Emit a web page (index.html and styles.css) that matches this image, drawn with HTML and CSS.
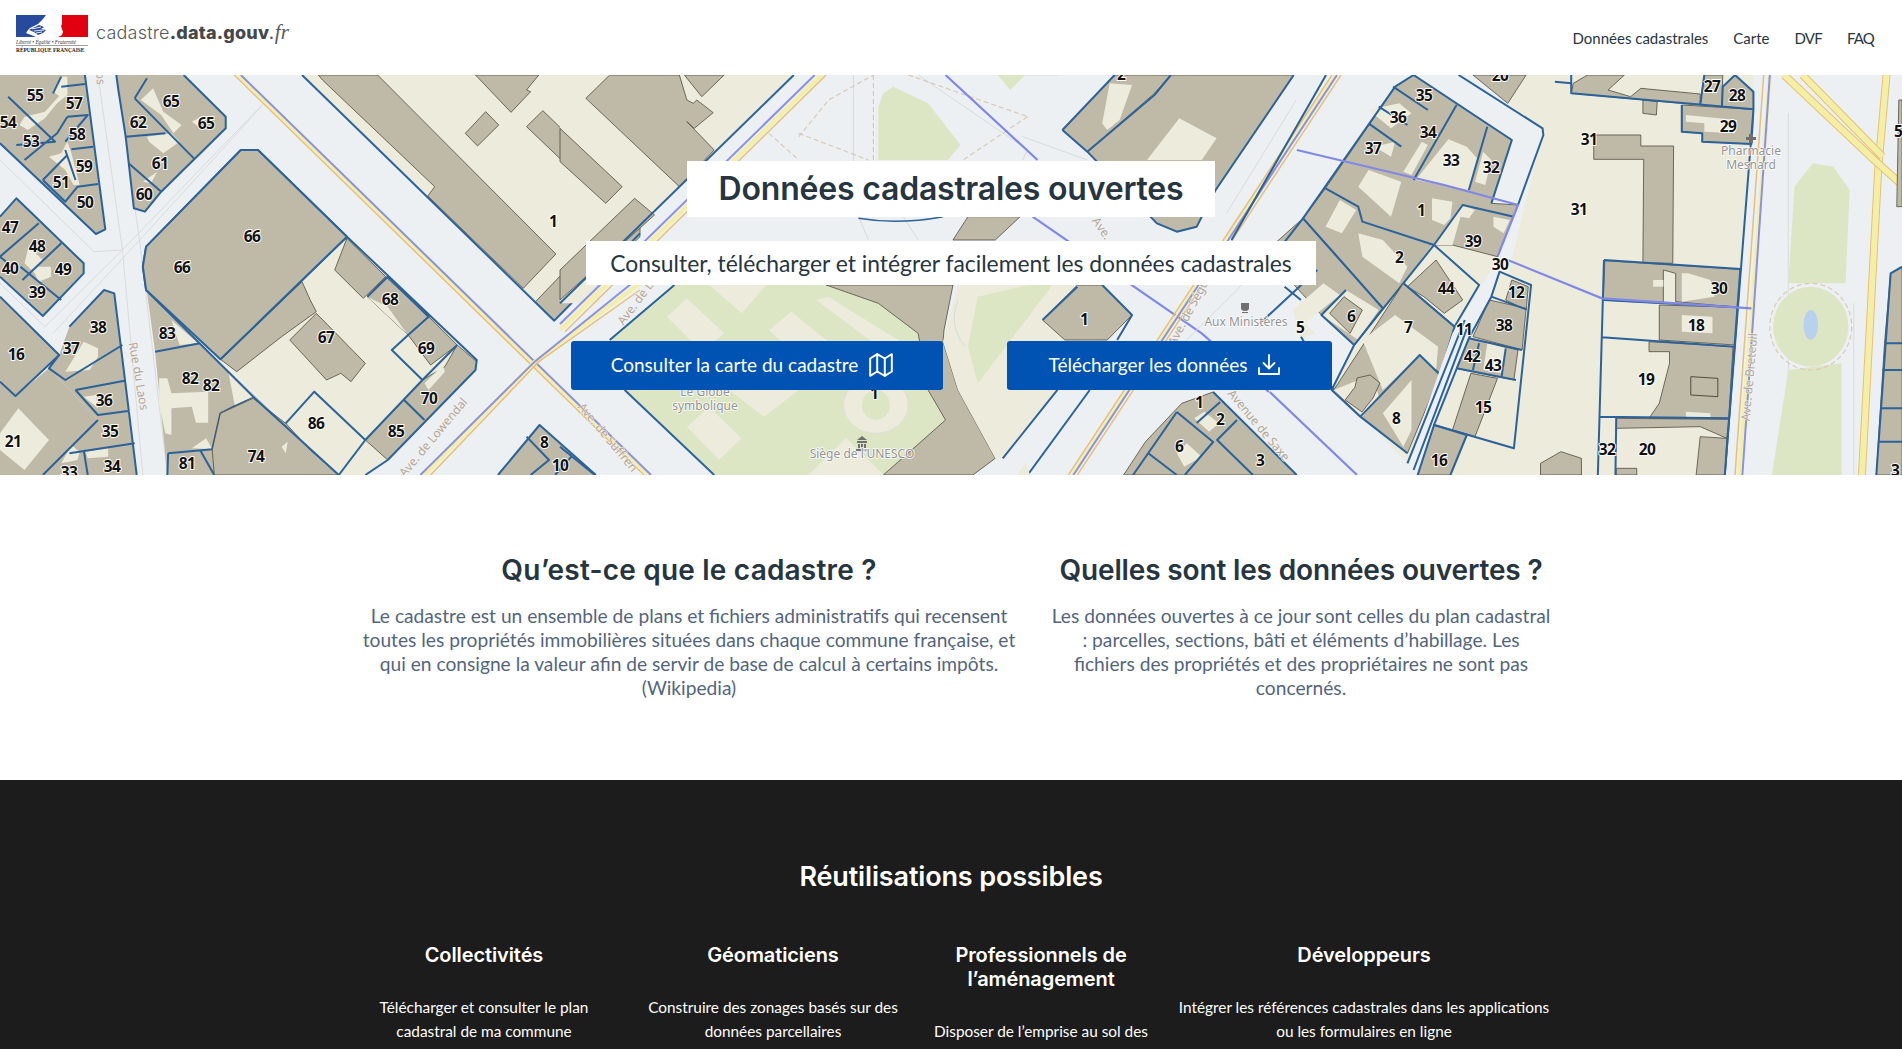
FILE: index.html
```html
<!DOCTYPE html>
<html lang="fr">
<head>
<meta charset="utf-8">
<title>cadastre.data.gouv.fr</title>
<link rel="stylesheet" href="styles.css">
</head>
<body>
<header class="site-header">
  <a class="brand" href="#">
    <svg class="marianne" viewBox="0 0 72 41" width="72" height="41" aria-label="République Française">
      <rect x="0" y="0" width="72" height="22" fill="#fff"/>
      <path d="M0 0H30L27 4L24 7L22 9L14 13L12 15L10 18L20 22H0Z" fill="#264a9d"/>
      <path d="M46 0H72V22H42L46 20L47 17L46 14L45 11L46 9L46 6Z" fill="#e1000f"/>
      <path d="M13 15L23 10L28 12L25 14L30 15L27 18L22 20L18 17Z" fill="#264a9d"/>
      <path d="M16 14L25 12M18 16L28 15M20 18L26 17" stroke="#fff" stroke-width=".9" fill="none"/>
      <text class="motto" x="0" y="28.500">Liberté • Égalité • Fraternité</text>
      <rect x="0" y="30" width="72" height=".7" fill="#777"/>
      <text class="rf" x="0" y="37">RÉPUBLIQUE FRANÇAISE</text>
    </svg>
    <span class="brand-name">cadastre<b>.data.gouv</b><i>.fr</i></span>
  </a>
  <nav class="site-nav">
    <a href="#">Données cadastrales</a>
    <a href="#">Carte</a>
    <a class="nav-caps" href="#">DVF</a>
    <a class="nav-caps" href="#">FAQ</a>
  </nav>
</header>

<section class="hero">
  <svg class="map" viewBox="0 75 1902 400" width="1902" height="400" preserveAspectRatio="none" aria-hidden="true">
    <rect x="0" y="75" width="1902" height="400" class="road"/>

    <!-- West part of the map -->
    <g transform="translate(0,70) scale(.40816,.33333)">
      <path class="th" d="M240 15L300 540L350 1215M285 15L345 540L410 1215M650 95L300 540L110 770L0 640M640 110L350 500L130 790M0 270L230 545L300 540"/>
      <path class="yl" d="M585 15L1590 1215"/><path class="or" d="M574 15L1578 1215"/><path class="pu" d="M590 15L1595 1215"/>
      <path class="yl" d="M1568 640L1310 875L1040 1215"/><path class="pu" d="M1568 620L1310 875L1030 1215"/><path class="or" d="M1568 660L1320 875L1055 1215"/>
      <path class="c" d="M740 15L1358 752L1568 490V15Z"/>
      <path class="b" d="M780 15L925 15L1362 552L1282 655L1048 378L1065 350L790 30Z"/>
      <path class="b" d="M1190 125L1222 165L1170 228L1140 190Z"/>
      <path class="b" d="M1330 122L1522 350L1487 400L1290 170Z"/>
      <path class="b" d="M1165 15H1320L1290 60L1300 65L1252 127Z"/>
      <path class="b" d="M1437 85L1500 15H1568V240Z"/>
      <path class="b" d="M1555 385L1568 398V500L1358 752L1312 695Z"/>
      <path class="p" d="M740 15L1358 752L1568 490"/>

      <path class="b nl" d="M0 15H208L258 478L235 492L0 220Z"/>
      <path class="c" d="M150 20L130 65L145 78L110 125L60 140L48 165L68 180L110 145L140 100L165 75L165 20Z"/>
      <path class="c" d="M165 215L150 250L120 260L160 300L180 345L195 345L175 250Z"/>
      <path class="p" d="M0 220L235 492L258 478L208 15M20 80L135 215L40 225M150 50L208 42M130 70L150 20M165 140L215 135L160 215M105 330L165 255M175 238L228 230M105 330L160 395L190 350L240 342M185 330L160 240M60 270L140 190L165 140"/>

      <path class="b nl" d="M285 15H450L553 140V175L395 365L355 425L328 415L308 200L290 60Z"/>
      <path class="c" d="M345 90L375 55L400 125L445 165L425 190L395 135Z"/>
      <path class="c" d="M360 200L420 190L440 215L400 250L365 215Z"/>
      <path class="c" d="M350 335L385 305L370 340Z"/>
      <path class="c" d="M470 155L492 140L492 175Z"/>
      <path class="c" d="M480 260L545 185L553 175L490 265Z"/>
      <path class="p" d="M285 15L290 60L308 200L328 415L355 425L395 365L553 175V140L450 15M330 85L475 265M308 200L405 190M315 280L395 365M360 25L330 85"/>

      <path class="b nl" d="M0 440L40 385L205 580V610L105 738L0 620Z"/>
      <path class="c" d="M70 530L105 570L90 590L125 590L125 620L95 635L85 610L60 580Z"/>
      <path class="p" d="M0 440L40 385L205 580V610L105 738L0 620M95 460L0 560M150 520L55 630M50 590L150 690M0 560L30 590"/>

      <path class="b nl" d="M0 680L145 855L38 978L0 935Z"/>
      <path class="b nl" d="M255 660L280 670L335 1215H105L240 1050L120 895L145 855L170 770Z"/>
      <path class="b nl" d="M0 935L38 978L120 895L240 1050L105 1215H0Z"/>
      <path class="c" d="M0 1090L45 1015L120 1110L60 1200L0 1140Z"/>
      <path class="c" d="M160 905L205 815L240 835L240 860L220 900Z"/>
      <path class="c" d="M205 980L235 975L240 1015Z"/>
      <path class="c" d="M210 1145L265 1135L265 1160L215 1165Z"/>
      <path class="c" d="M150 1180L175 1125L195 1145L190 1170Z"/>
      <path class="p" d="M0 680L145 855L38 978L0 935M145 855L120 895L160 930L300 825M170 770L255 660L280 670L335 1215M185 960L305 932M185 960L240 1035L318 1022M170 1150L330 1120M205 1140L215 1215M105 1215L240 1050"/>

      <path class="b nl" d="M360 665L610 960L830 1215H410L380 845Z"/>
      <path class="c" d="M420 750L485 820L440 825Z"/>
      <path class="c" d="M390 925H410L420 970L510 965V1058L480 1058L470 1010L420 1015V1095L405 1090L390 1000Z"/>
      <path class="c" d="M470 1135L505 1105L520 1138Z"/>
      <path class="c" d="M515 855L525 850L530 865Z"/>
      <path class="p" d="M380 845L490 820M412 1150L520 1138L540 1030L620 980M490 1140L525 1215M410 1215L412 1150"/>

      <path class="c" d="M850 500L1168 870L1165 900L950 1170L895 1215H830L540 868Z"/>
      <path class="b" d="M820 600L850 505L945 620L890 685Z"/>
      <path class="b" d="M540 868L740 635L760 690L775 725L690 800L580 905Z"/>
      <path class="b" d="M710 810L775 730L895 880L860 935L835 910L800 930Z"/>
      <path class="b" d="M945 620L1050 740L1000 795L900 680Z"/>
      <path class="c" d="M900 680L1000 795L985 770L950 710Z"/>
      <path class="b" d="M1050 740L1120 825L1055 885L1000 795Z"/>
      <path class="b" d="M1120 825L1168 875L1165 900L950 1170L895 1110L1035 930L1090 890Z"/>
      <path class="c" d="M1040 940L1085 885L1090 905L1050 960Z"/>
      <path class="b" d="M620 985L700 1060L760 1140L830 1215H525L520 1140L540 1030Z"/>
      <path class="c" d="M690 1130L705 1115L700 1150Z"/>
      <path class="c" d="M560 910L620 980L575 1005Z"/>
      <path class="p" d="M358 660L620 980L830 1215M358 660L350 590L358 530L590 240H632L850 500L1168 870L1165 900L950 1170L895 1215M540 868L850 500M700 1060L770 965L895 1110L830 1215M900 680L950 620L1050 740L1000 795M1000 795L960 840L1035 930L1120 825M895 1110L1035 930M990 990L1040 1050"/>
      <path class="b nl" d="M590 240H632L850 500L540 868L358 660L350 590L358 530Z"/>
      <path class="p" d="M358 660L350 590L358 530L590 240H632L850 500L540 868Z"/>
      <path class="b nl" d="M1322 1065L1460 1215H1220Z"/><path class="p" d="M1220 1215L1322 1065L1460 1215M1290 1100L1345 1170L1300 1215M1400 1160L1360 1215"/>
    </g>

    <!-- Centre part of the map -->
    <g transform="translate(560,70) scale(.49744,.33333)">
      <path class="th" d="M590 15L590 280M720 15L940 240L930 270M930 200L1060 270M920 15L1000 15M600 440L620 510M690 440L720 510"/>
      <path class="g" d="M650 70L670 50L740 100L805 225L780 270H640V110Z"/>
      <path class="g" d="M880 15H935L905 60Z"/>
      <path class="da" d="M630 15V270M480 200L540 90L630 15M700 15L940 140M480 190L620 270M940 140L810 270M420 190L480 270"/>
      <path class="pur" d="M775 15L960 270M950 440L1290 790L1425 966"/>
      <path class="th" d="M1480 90L1340 430M1530 70L1340 500"/>

      <path class="c" d="M80 15H470L0 700Z"/><path class="c" d="M0 15H80V700H0Z"/>
      <path class="b" d="M52 85L100 15H240L255 90L268 100L275 90L308 128L270 175L255 155L310 240L240 350Z"/>
      <path class="b" d="M250 15H330L285 80Z"/>
      <path class="b" d="M0 175L125 350L92 400L0 275Z"/>
      <path class="b" d="M0 600L150 385L190 435L0 690Z"/>
      <path class="p" d="M470 15L0 700"/>
      <path class="yl" d="M525 15L0 780"/><path class="or" d="M535 15L10 785"/><path class="pu" d="M512 15L0 762"/>
      <path class="p" d="M70 1215L0 1130"/>

      <path class="g" d="M230 645H535L640 700L720 790L740 960L775 1050L650 1215L575 1105L500 1215H310L130 960L100 810Z"/>
      <path class="c" d="M215 740L255 685L330 790L285 845Z"/>
      <path class="c" d="M300 645H415L365 730Z"/>
      <path class="c" d="M420 780L465 725L560 840L510 900Z"/>
      <path class="c" d="M255 1070L300 1010L365 1105L320 1170Z"/>
      <path class="c" d="M340 960H480L410 1040Z"/>
      <path class="c" d="M515 690L540 680L690 820L640 830Z"/>
      <ellipse cx="635" cy="1005" rx="65" ry="85" class="cr"/>
      <ellipse cx="635" cy="1005" rx="28" ry="45" class="g"/>
      <path class="b" d="M535 645H790L772 780L770 815L800 960L875 1165L830 1215H650L775 1050L740 960L720 790L640 700Z"/>
      <path class="c" d="M575 1105L650 1215H500Z"/>
      <path class="c" d="M790 700L800 645H1030L1145 735L1100 820L1000 960L890 1165H875L800 960L770 815Z"/>
      <path class="g" d="M840 680L940 645H990L840 940L820 830Z"/>
      <path class="th" d="M800 690Q780 770 815 830"/>
      <path class="b" d="M1040 645H1090L1150 735L1100 810H1015L970 750Z"/>
      <path class="p" d="M1090 645L1150 735L1120 810M1040 650L970 750M230 645L100 810M130 960L310 1215M1000 960L890 1165"/>

      <path class="b" d="M1010 180L1115 15H1228L1195 70L1060 245Z"/>
      <path class="c" d="M1105 40L1150 45L1125 150L1100 180L1090 160Z"/>
      <path class="b" d="M1060 245L1195 75L1228 15H1475L1318 360L1280 470L1240 485L1200 460Z"/>
      <path class="c" d="M1180 270L1245 145L1320 205L1290 270Z"/>
      <path class="p" d="M1010 180L1115 15M1010 180L1060 245L1195 75L1228 15M1475 15L1318 360L1280 470L1240 485L1200 460L1060 245"/>
      <path class="psoft" d="M600 445Q680 465 770 440"/>
      <path class="b" d="M820 440H925L875 510H790Z"/>

      <path class="yl" d="M1560 15L1030 1215"/><path class="or" d="M1570 15L1040 1215M1552 15L1022 1215"/><path class="pu" d="M1562 15L1032 1215"/><path class="p" d="M1540 15L1350 510"/>
      <path class="p" d="M1065 960L940 1215"/>
      <path class="c" d="M935 1175L945 1215H920Z"/>

      <path class="b" d="M1250 1000L1313 966L1481 1215H1133L1177 1115Z"/>
      <path class="c" d="M1240 1150L1260 1120L1290 1160L1255 1190Z"/>
      <path class="c" d="M1275 1045L1295 1025L1325 1060L1305 1085Z"/>
      <path class="p" d="M1313 966L1481 1215M1240 1026L1152 1215M1240 1026L1313 1116L1256 1215M1327 996L1280 1059M1361 1050L1321 1110L1393 1215M1182 1149L1240 1215"/>
      <path class="th" d="M1160 960L1370 645"/>
    </g>

    <!-- East part of the map -->
    <g transform="translate(1260,70) scale(.4095,.33333)">
      <path class="th" d="M1280 15L1568 360M1290 130V1215M1450 700V1215"/>
      <path class="g" d="M1305 350L1350 280L1400 290L1440 360L1430 640L1290 640Z"/>
      <path class="g" d="M1290 900L1420 880V1215H1250Z"/>
      <ellipse cx="1345" cy="770" rx="92" ry="120" class="g"/>
      <ellipse cx="1345" cy="770" rx="100" ry="130" class="da"/>
      <ellipse cx="1345" cy="765" rx="18" ry="45" class="w"/>
      <path class="ow" d="M1530 15L1510 290L1470 1215"/><path class="yl wide" d="M1530 15L1510 290L1470 1215"/>
      <path class="ow" d="M1280 15L1500 270L1568 345M1325 15L1520 260"/><path class="yl wide" d="M1280 15L1500 270L1568 345M1325 15L1520 260"/>
      <path class="yl" d="M1245 15L1170 1215"/><path class="or" d="M1230 15L1160 1215"/><path class="pu" d="M1245 15L1178 1215"/>

      <path class="c" d="M600 15H1205V118L1135 1215H450L600 640L690 190L610 105Z"/>
      <path class="b" d="M815 195H930V228H1010L1008 580L935 578L937 268H815Z"/>
      <path class="b" d="M935 90L970 95L968 135L935 130Z"/>
      <path class="b" d="M765 40L800 15H890L850 60L905 80L930 55L1075 72V105L760 70Z"/>
      <path class="b" d="M1085 15H1130L1128 110L1075 105Z"/>
      <path class="b" d="M1160 15L1205 65V118L1128 110L1130 50Z"/>
      <path class="b" d="M1030 105L1205 118L1200 222L1080 215V190L1030 185Z"/>
      <path class="c" d="M1040 135L1165 150L1160 190L1085 185V160L1040 155Z"/>
      <path class="p" d="M720 35L760 40M760 15V70L1205 118V65L1160 15M1075 105L1085 15M1128 110L1130 50L1160 15M1030 105V185L1080 190V215L1200 222L1205 118L1135 1215"/>
      <path class="b" d="M685 1180L735 1145L785 1165V1215H685Z"/>

      <path class="b" d="M842 572L1172 598L1168 712L1015 695V610L985 600V700L905 695L838 690Z"/>
      <path class="c" d="M960 630H985V650H960Z"/>
      <path class="c" d="M1030 610H1045L1100 630L1110 680L1030 695Z"/>
      <path class="b" d="M975 705L1165 712L1160 825L975 810Z"/>
      <path class="c" d="M1030 735L1105 740V790L1030 785Z"/>
      <path class="b" d="M950 815L1155 830L1145 1045H950L975 1000L1000 880V845L950 845Z"/>
      <path class="n" d="M1052 920L1118 925V980L1052 975Z"/>
      <path class="c" d="M1040 1025L1100 1030V1045H1040Z"/>
      <path class="b" d="M870 1045L1145 1048L1140 1105L1075 1070L870 1075Z"/>
      <path class="b" d="M1075 1100L1140 1105L1135 1215H1065Z"/>
      <path class="b" d="M870 1195H920V1215H870Z"/>
      <path class="p" d="M840 570L1173 597L1135 1215M840 570L825 1215M835 802L1160 830M828 1040L1145 1045M870 1040L868 1215M840 690L1165 712"/>

      <path class="c" d="M330 50L375 15H490L690 175L692 195L580 560L500 750L470 790L360 1180L250 1040L175 960L230 825L150 735L105 445L160 355Z"/>
      <path class="road" d="M485 15L690 175L692 195L620 420L565 400L615 210L375 15Z"/>
      <path class="b" d="M520 15H650L605 100Z"/>
      <path class="b" d="M330 50L375 15L615 210L565 400L630 405L580 560L470 525L425 525L350 640L300 715L105 445L160 355Z"/>
      <path class="c" d="M240 350L265 300L345 335L320 440Z"/>
      <path class="c" d="M420 385L470 395L465 445L450 465L420 450Z"/>
      <path class="c" d="M380 330L460 208L505 230L530 265L510 360L450 345Z"/>
      <path class="c" d="M525 335L545 245L565 270L550 345Z"/>
      <path class="c" d="M160 470L195 390L235 420L200 490Z"/>
      <path class="c" d="M240 490L300 510L360 590L340 640L250 560Z"/>
      <path class="c" d="M495 405L425 525L470 525L490 440L510 445L525 420Z"/>
      <path class="c" d="M570 440L610 450L595 490L570 470Z"/>
      <path class="c" d="M265 120L340 100L370 130L320 175Z"/>
      <path class="c" d="M280 230L330 215L320 260Z"/>
      <path class="c" d="M350 305L395 215L410 225L370 315Z"/>
      <path class="c" d="M420 525L535 645L475 770L350 640Z"/>
      <path class="b" d="M430 570L495 690L450 730L400 680L360 650Z"/>
      <path class="p" d="M330 50L375 15L615 210L565 400M330 50L105 445L300 715M325 50L410 120M290 110L360 165M265 160L345 230M480 105L375 330M555 170L510 360M160 355L240 410L250 455L425 525L495 405L620 440M425 525L350 640L230 825M350 640L475 770L535 645L425 525M485 15L690 175L692 195L630 405"/>

      <path class="b" d="M0 560L105 445L300 715L230 825L150 735L80 640Z"/>
      <path class="c" d="M80 720L155 640L195 675L110 760L135 790L100 810Z"/>
      <path class="c" d="M150 735L210 660L290 720L240 810Z"/>
      <path class="b" d="M170 730L205 680L250 720L220 790Z"/>
      <path class="p" d="M0 610L105 445L300 715L230 825L150 735L210 660M140 600L0 760M60 650L100 690M100 800L180 960"/>

      <path class="b" d="M350 640L475 770L440 910L390 855L245 1040L180 960Z"/>
      <path class="c" d="M250 810L330 735L435 830L430 900L390 855L300 960Z"/>
      <path class="b" d="M390 855L440 915L360 1150L245 1040Z"/>
      <path class="c" d="M300 1030L370 930L370 1080L350 1130Z"/>
      <path class="c" d="M180 960L250 1040L290 980L280 930L240 930Z"/>
      <path class="b" d="M208 990L232 951L237 924L269 915L293 939L276 984L249 1026Z"/>
      <path class="p" d="M350 640L475 770L440 915L390 855L245 1040L175 960L230 825M245 1040L360 1150"/>
      <path class="pur" d="M24 966L237 1215"/>

      <path class="road" d="M580 570L495 770L375 1200L360 1180L470 790Z"/>
      <path class="c" d="M585 605L662 645L620 1135L425 1065L510 805L565 680Z"/>
      <path class="b" d="M615 630L655 650L650 720L600 690Z"/>
      <path class="b" d="M560 690L650 715L640 840L520 800Z"/>
      <path class="b" d="M510 805L630 840L620 930L480 895Z"/>
      <path class="c" d="M555 820L600 835L590 910L545 900Z"/>
      <path class="b" d="M515 910L580 925L525 1100L470 1080Z"/>
      <path class="p" d="M585 605L662 645L620 1135L425 1065L510 805L565 680ZM565 680L650 718M510 805L640 840M480 895L625 930M600 835L590 920M535 820L520 900"/>
      <path class="b" d="M425 1065L505 1095L465 1215H385Z"/>
      <path class="p" d="M385 1215L425 1065L505 1095L465 1215M360 1180L500 750M375 1200L510 760"/>

      <path class="pur" d="M90 240L450 345L630 405L580 560"/>
      <path class="pur" d="M605 570L835 685L1200 715"/>

      <path class="b" d="M1540 610L1568 590V1215H1505L1525 820Z"/>
      <path class="p" d="M1568 590L1540 610L1505 1215M1525 820H1568M1520 900H1568M1515 1015H1568M1510 1115H1568"/>
      <path class="b" d="M1560 90H1568V410H1555Z"/>
    </g>

    <g class="poi-mark">
      <path d="M857 441H867V443H857ZM858 444H860V448H858ZM861 444H863V448H861ZM864 444H866V448H864ZM856 449H868V451H856ZM857 440L862 436L867 440Z"/>
      <path d="M1241 303H1249V308Q1249 311 1245 311Q1241 311 1241 308ZM1242 312H1248V313H1242Z"/>
      <path d="M1749 134H1753V137H1756V140H1753V143H1749V140H1746V137H1749Z"/>
    </g>
    <g class="rd">
      <text transform="translate(139,376) rotate(80)">Rue du Laos</text>
      <text transform="translate(101,78) rotate(85)">os</text>
      <text transform="translate(433,437) rotate(-50)">Ave. de Lowendal</text>
      <text transform="translate(608,437) rotate(50)">Ave. de Suffren</text>
      <text transform="translate(635,303) rotate(-53)">Ave. de L</text>
      <text transform="translate(1259,425) rotate(50)">Avenue de Saxe</text>
      <text transform="translate(1189,310) rotate(-62)">Ave. de Ségur</text>
      <text transform="translate(1102,228) rotate(55)">Ave.</text>
      <text transform="translate(1749,377) rotate(-85)">Ave. de Breteuil</text>
    </g>
    <g class="poi">
      <text x="705" y="396">Le Globe</text>
      <text x="705" y="410">symbolique</text>
      <text x="862" y="458">Siège de l'UNESCO</text>
      <text x="1246" y="326">Aux Ministères</text>
      <text x="1751" y="155">Pharmacie</text>
      <text x="1751" y="169">Mesnard</text>
    </g>
    <g class="num">
      <text x="35" y="95">55</text><text x="74" y="103">57</text><text x="8" y="122">54</text><text x="31" y="141">53</text><text x="77" y="134">58</text><text x="84" y="166">59</text><text x="61" y="182">51</text><text x="85" y="202">50</text>
      <text x="171" y="101">65</text><text x="138" y="122">62</text><text x="206" y="123">65</text><text x="160" y="163">61</text><text x="144" y="194">60</text><text x="252" y="236">66</text><text x="182" y="267">66</text>
      <text x="10" y="227">47</text><text x="37" y="246">48</text><text x="10" y="268">40</text><text x="63" y="269">49</text><text x="37" y="292">39</text><text x="98" y="327">38</text><text x="71" y="348">37</text><text x="16" y="354">16</text>
      <text x="167" y="333">83</text><text x="390" y="299">68</text><text x="326" y="337">67</text><text x="426" y="348">69</text><text x="190" y="378">82</text><text x="211" y="385">82</text><text x="104" y="400">36</text><text x="429" y="398">70</text>
      <text x="316" y="423">86</text><text x="396" y="431">85</text><text x="110" y="431">35</text><text x="13" y="441">21</text><text x="256" y="456">74</text><text x="69" y="472">33</text><text x="112" y="466">34</text><text x="187" y="463">81</text>
      <text x="544" y="442">8</text><text x="560" y="465">10</text><text x="553" y="221">1</text>
      <text x="1084" y="319">1</text><text x="874" y="393">1</text><text x="1199" y="402">1</text><text x="1220" y="419">2</text><text x="1179" y="446">6</text><text x="1260" y="460">3</text><text x="1300" y="327">5</text><text x="1121" y="74">2</text>
      <text x="1424" y="95">35</text><text x="1398" y="117">36</text><text x="1428" y="132">34</text><text x="1373" y="148">37</text><text x="1451" y="160">33</text><text x="1491" y="167">32</text><text x="1421" y="210">1</text><text x="1473" y="241">39</text>
      <text x="1399" y="257">2</text><text x="1500" y="264">30</text><text x="1446" y="288">44</text><text x="1516" y="292">12</text><text x="1351" y="316">6</text><text x="1408" y="327">7</text><text x="1464" y="329">11</text><text x="1504" y="325">38</text>
      <text x="1472" y="356">42</text><text x="1493" y="365">43</text><text x="1483" y="407">15</text><text x="1396" y="418">8</text><text x="1439" y="460">16</text><text x="1589" y="139">31</text><text x="1579" y="209">31</text><text x="1500" y="75">20</text>
      <text x="1712" y="86">27</text><text x="1737" y="95">28</text><text x="1728" y="126">29</text><text x="1719" y="288">30</text><text x="1696" y="325">18</text><text x="1646" y="379">19</text><text x="1607" y="449">32</text><text x="1647" y="449">20</text>
      <text x="1898" y="131">5</text><text x="1895" y="470">3</text>
    </g>
  </svg>

  <div class="hero-content">
    <h1 class="hero-title">Données cadastrales ouvertes</h1>
    <p class="hero-sub">Consulter, télécharger et intégrer facilement les données cadastrales</p>
    <div class="hero-actions">
      <a class="btn btn-map" href="#">Consulter la carte du cadastre
        <svg class="icon" viewBox="0 0 24 24" width="26" height="26"><path d="M2 6V22L8.5 18L15.500 22L22 18V2L15.500 6L8.5 2Z"/><path d="M8.500 2V18M15.500 6V22"/></svg>
      </a>
      <a class="btn btn-dl" href="#">Télécharger les données
        <svg class="icon" viewBox="0 0 24 24" width="24" height="24"><path d="M12 2V15M6.500 10L12 15.500L17.500 10M2 15V21H22V15"/></svg>
      </a>
    </div>
  </div>
</section>

<section class="about">
  <article class="about-col about-col-a">
    <h2>Qu’est-ce que le cadastre ?</h2>
    <p>Le cadastre est un ensemble de plans et fichiers administratifs qui recensent<br>toutes les propriétés immobilières situées dans chaque commune française, et<br>qui en consigne la valeur afin de servir de base de calcul à certains impôts.<br>(Wikipedia)</p>
  </article>
  <article class="about-col about-col-b">
    <h2>Quelles sont les données ouvertes ?</h2>
    <p>Les données ouvertes à ce jour sont celles du plan cadastral<br>: parcelles, sections, bâti et éléments d’habillage. Les<br>fichiers des propriétés et des propriétaires ne sont pas<br>concernés.</p>
  </article>
</section>

<section class="uses">
  <h2>Réutilisations possibles</h2>
  <div class="uses-grid">
    <article><h3>Collectivités</h3><p>Télécharger et consulter le plan<br>cadastral de ma commune</p></article>
    <article><h3>Géomaticiens</h3><p>Construire des zonages basés sur des<br>données parcellaires</p></article>
    <article><h3>Professionnels de<br>l’aménagement</h3><p>Disposer de l’emprise au sol des<br>bâtiments</p></article>
    <article><h3>Développeurs</h3><p>Intégrer les références cadastrales dans les applications<br>ou les formulaires en ligne</p></article>
  </div>
</section>
</body>
</html>
```

FILE: styles.css
```css
html, body { margin: 0; height: 100%; overflow: hidden; }
body { font-family: "Lato", "Noto Sans", sans-serif; color: #26353f; background: #fff; }
a { color: inherit; text-decoration: none; }

.site-header { height: 75px; display: flex; justify-content: space-between; padding: 0 28px 0 16px; box-sizing: border-box; }
.brand { display: flex; align-items: flex-start; gap: 8px; padding-top: 15px; }
.marianne { display: block; }
.motto { font: italic 5.2px "Liberation Serif", serif; fill: #333; }
.rf { font: bold 5.4px "Liberation Serif", serif; fill: #222; }
.brand-name { font: 300 18px/26px "Inter", sans-serif; color: #55585c; letter-spacing: .2px; margin-top: 4px; }
.brand-name b { font-weight: 800; color: #44474b; }
.brand-name i { font-family: "Liberation Serif", serif; font-size: 21px; }
.site-nav { display: flex; gap: 25px; align-items: center; font-size: 15px; color: #26353f; }
.nav-caps { letter-spacing: -.8px; }

.hero { position: relative; height: 400px; overflow: hidden; }
.map { position: absolute; inset: 0; display: block; }
.map * { vector-effect: non-scaling-stroke; }
.road { fill: #ecf0f3; }
.c { fill: #ecebdc; }
.g { fill: #dde6c4; }
.w { fill: #b8d2ee; }
.cr { fill: #ecebdc; stroke: #dfe0d8; stroke-width: 1; }
.b { fill: #bfb9a7; stroke: #4f4c40; stroke-width: .8; }
.b.nl { stroke: none; }
.n { fill: none; stroke: #4f4c40; stroke-width: 1; }
.p { fill: none; stroke: #2b6299; stroke-width: 2; stroke-linejoin: round; }
.psoft { fill: none; stroke: #2b6299; stroke-width: 1.500; }
.pu { fill: none; stroke: #8a90e6; stroke-width: 2; }
.pur { fill: none; stroke: #8088e6; stroke-width: 2.200; }
.yl { fill: none; stroke: #f5efa6; stroke-width: 4; }
.yl.wide { stroke-width: 6; }
.ow { fill: none; stroke: #e6c07b; stroke-width: 8; }
.or { fill: none; stroke: #e6c07b; stroke-width: 1.500; }
.th { fill: none; stroke: #d9dbdc; stroke-width: 1; }
.da { fill: none; stroke: #dac9b5; stroke-width: 1.200; stroke-dasharray: 5 3; }
.poi-mark path { fill: #6f6f6f; }
.num text { font: 700 15.500px "Noto Sans", sans-serif; letter-spacing: -.7px; fill: #111; text-anchor: middle; dominant-baseline: central; paint-order: stroke; stroke: #fff; stroke-width: 1.800; }
.poi text { font: 12px "Noto Sans", sans-serif; fill: #8f8f8f; text-anchor: middle; paint-order: stroke; stroke: #fff; stroke-width: 1.500; opacity: .95; }
.rd text { font: 12px "Noto Sans", sans-serif; fill: #b3a597; text-anchor: middle; dominant-baseline: central; paint-order: stroke; stroke: #f4f4f2; stroke-width: 1; }

.hero-content { position: relative; display: flex; flex-direction: column; align-items: center; padding-top: 86px; }
.hero-title { margin: 0; height: 56px; box-sizing: border-box; padding: 0 32px; background: #fff; font: 600 32px/56px "Inter", sans-serif; letter-spacing: -.2px; color: #26353f; }
.hero-sub { margin: 24px 0 0; height: 44px; box-sizing: border-box; padding: 0 24px; background: #fff; font-size: 22.850px; line-height: 44px; color: #26353f; }
.hero-actions { display: flex; gap: 64px; margin-top: 56px; }
.btn { height: 49px; display: flex; align-items: center; justify-content: center; gap: 10px; background: #0053b3; color: #fff; border-radius: 3px; font-size: 19px; box-sizing: border-box; padding: 0 8px 2px 0; }
.btn-map { width: 372px; }
.btn-dl { width: 325px; }
.icon { fill: none; stroke: #fff; stroke-width: 1.800; stroke-linejoin: round; stroke-linecap: round; }

.about { height: 305px; display: grid; grid-template-columns: 676px 500px; justify-content: center; box-sizing: border-box; padding-top: 77px; column-gap: 24px; }
.about-col { text-align: center; }
.about h2 { margin: 0; font: 600 28px/36px "Inter", sans-serif; letter-spacing: -.15px; color: #26353f; }
.about-col-a h2 { letter-spacing: .2px; }
.about p { margin: 16px 0 0; font-size: 19.200px; line-height: 24px; color: #53657d; white-space: nowrap; }

.uses { background: #1c1c1c; color: #fff; text-align: center; padding-top: 79px; height: 400px; box-sizing: border-box; }
.uses h2 { margin: 0; font: 600 27px/36px "Inter", sans-serif; letter-spacing: -.15px; }
.uses-grid { display: grid; grid-template-columns: 266px 312px 224px 422px; margin: 48px 0 0 351px; width: 1224px; }
.uses h3 { margin: 0; font: 600 20px/24px "Inter", sans-serif; letter-spacing: -.1px; }
.uses article p { margin: 28px 0 0; font-size: 15.360px; line-height: 24px; }
```
